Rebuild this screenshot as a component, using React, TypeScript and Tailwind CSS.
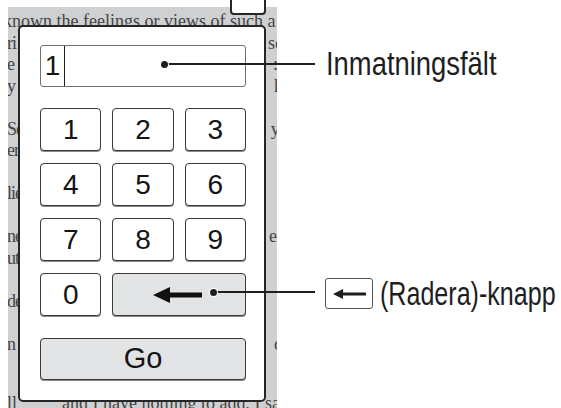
import React from 'react';

// Background page lines peeking out around the dialog (null = paragraph gap)
const lines: ({ l: string; r: string } | null)[] = [
  { l: 'known the feelings or views of such a', r: '' },
  { l: 'ri', r: 'sc' },
  { l: 'e s', r: '::' },
  { l: 'y', r: 'h' },
  null,
  { l: 'Se', r: 'y.' },
  { l: 'er', r: '' },
  null,
  { l: 'lie', r: '' },
  null,
  { l: 'ne', r: 'er' },
  { l: 'ut', r: '' },
  null,
  { l: 'de', r: '' },
  null,
  { l: 'n', r: 'd' },
  null,
];

const Key: React.FC<{ children: React.ReactNode; gray?: boolean; wide?: boolean }> = ({
  children,
  gray,
  wide,
}) => (
  <div
    className={`h-[43px] rounded-[4px] border border-[#3a3a3a] shadow-[0_1px_0_#8a8a8a] flex items-center text-[28px] leading-none text-[#141414] ${
      gray ? 'bg-[#e2e3e5]' : 'bg-white'
    } ${wide ? 'col-span-2 justify-start pl-[40px]' : 'justify-center'}`}
  >
    {children}
  </div>
);

const BackArrow: React.FC = () => (
  <svg width="49" height="16" viewBox="0 0 49 16">
    <polygon points="0,8 17,0 17,16" fill="#111" />
    <rect x="16" y="5.5" width="33" height="5" fill="#111" />
  </svg>
);

export default function App() {
  return (
    <div className="relative w-[561px] h-[408px] bg-white overflow-hidden pt-[7px] pl-[8px] font-['Liberation_Sans',Arial,sans-serif]">
      {/* book page */}
      <div className="relative w-[269px] h-[401px] bg-[#cfd0d2] overflow-hidden">
        <div className="pt-[4px] -ml-[5px] -mr-[6px] font-['Liberation_Serif','Times_New_Roman',serif] text-[18px] leading-[21.5px] text-[#444]">
          {lines.map((ln, i) =>
            ln ? (
              <div key={i} className="h-[21.5px] flex justify-between whitespace-pre">
                <span className={i === 0 ? '' : 'ml-[4px] tracking-[-1px]'}>{ln.l}</span>
                <span>{ln.r}</span>
              </div>
            ) : (
              <div key={i} className="h-[21.5px]" />
            )
          )}
          <div className="mt-[16px] h-[21.5px] whitespace-pre pl-[4px]">
            ll          and I have nothing to add, I said
          </div>
        </div>

        {/* number pad dialog */}
        <div className="absolute left-[10px] top-[18px] w-[248px] h-[377px] rounded-[5px] border-2 border-[#262626] bg-white pl-[20px] pr-[18px] pt-[18px]">
          <div className="h-[42px] flex rounded-[3px] border border-[#707070] bg-white">
            <div className="w-[24px] border-r-[1.5px] border-[#222] flex items-center justify-center text-[28px] text-[#141414]">
              1
            </div>
          </div>

          <div className="mt-[21px] grid grid-cols-3 gap-x-[11px] gap-y-[12px]">
            {['1', '2', '3', '4', '5', '6', '7', '8', '9', '0'].map((d) => (
              <Key key={d}>{d}</Key>
            ))}
            <Key gray wide>
              <BackArrow />
            </Key>
          </div>

          <div className="mt-[22px] h-[42px] rounded-[4px] border border-[#3a3a3a] shadow-[0_1px_0_#8a8a8a] bg-[#e2e3e5] flex items-center justify-center text-[29px] text-[#141414]">
            Go
          </div>
        </div>
      </div>

      {/* tab peeking at top */}
      <div className="absolute left-[230px] -top-[4px] w-[36px] h-[19px] rounded-[4px] border-2 border-[#262626] bg-white" />

      {/* callout: input field */}
      <div className="absolute left-[164px] top-[63px] w-[151px] h-[2px] bg-[#1e1e1e]" />
      <div className="absolute left-[161px] top-[61px] w-[7px] h-[7px] rounded-full bg-[#1e1e1e] ring-1 ring-white" />
      <div className="absolute left-[326px] top-[47px] whitespace-nowrap origin-left scale-x-[0.83] text-[33px] leading-[33px] text-[#1e1e1e]">
        Inmatningsfält
      </div>

      {/* callout: delete key */}
      <div className="absolute left-[213px] top-[291px] w-[102px] h-[2px] bg-[#1e1e1e]" />
      <div className="absolute left-[210px] top-[289px] w-[7px] h-[7px] rounded-full bg-[#1e1e1e] ring-1 ring-white" />
      <div className="absolute left-[325px] top-[277px] flex items-center whitespace-nowrap">
        <div className="w-[48px] h-[31px] rounded-[3px] border border-[#555] flex items-center justify-center">
          <svg width="33" height="10" viewBox="0 0 33 10">
            <polygon points="0,5 10,0 10,10" fill="#1e1e1e" />
            <rect x="9" y="3.5" width="24" height="3" fill="#1e1e1e" />
          </svg>
        </div>
        <span className="ml-[7px] origin-left scale-x-[0.76] text-[33px] leading-[33px] text-[#1e1e1e]">
          (Radera)-knapp
        </span>
      </div>
    </div>
  );
}
